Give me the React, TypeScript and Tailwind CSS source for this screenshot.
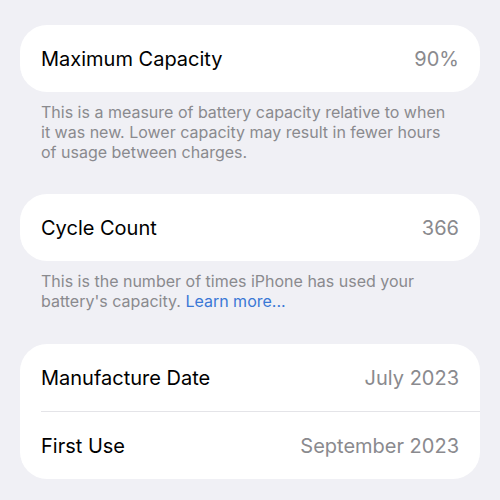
function Row({ label, value }: { label: string; value: string }) {
    return (
        <div className="flex items-center justify-between h-[67px]">
            <span className="text-[20px] text-black">{label}</span>
            <span className="text-[20px] text-[#8a8a8e]">{value}</span>
        </div>
    );
}

export default function App() {
    return (
        <div
            className="w-[500px] h-[500px] bg-[#f0f0f5] px-[20px] pt-[25px] overflow-hidden"
            style={{ fontFamily: 'Inter, "Noto Sans", sans-serif' }}
        >
            <div className="bg-white rounded-[27px] px-[21px]">
                <Row label="Maximum Capacity" value="90%" />
            </div>
            <p className="mt-[10px] pl-[21px] text-[16px] leading-[20px] text-[#8a8a8e] whitespace-nowrap">
                This is a measure of battery capacity relative to when<br />
                it was new. Lower capacity may result in fewer hours<br />
                of usage between charges.
            </p>

            <div className="mt-[32px] bg-white rounded-[27px] px-[21px]">
                <Row label="Cycle Count" value="366" />
            </div>
            <p className="mt-[10px] pl-[21px] text-[16px] leading-[20px] text-[#8a8a8e] whitespace-nowrap">
                This is the number of times iPhone has used your<br />
                battery's capacity. <span className="text-[#3a78d6]">Learn more...</span>
            </p>

            <div className="mt-[33px] bg-white rounded-[27px] pl-[21px]">
                <div className="pr-[21px] border-b border-[#e4e4e8]">
                    <Row label="Manufacture Date" value="July 2023" />
                </div>
                <div className="pr-[21px]">
                    <Row label="First Use" value="September 2023" />
                </div>
            </div>
        </div>
    );
}
